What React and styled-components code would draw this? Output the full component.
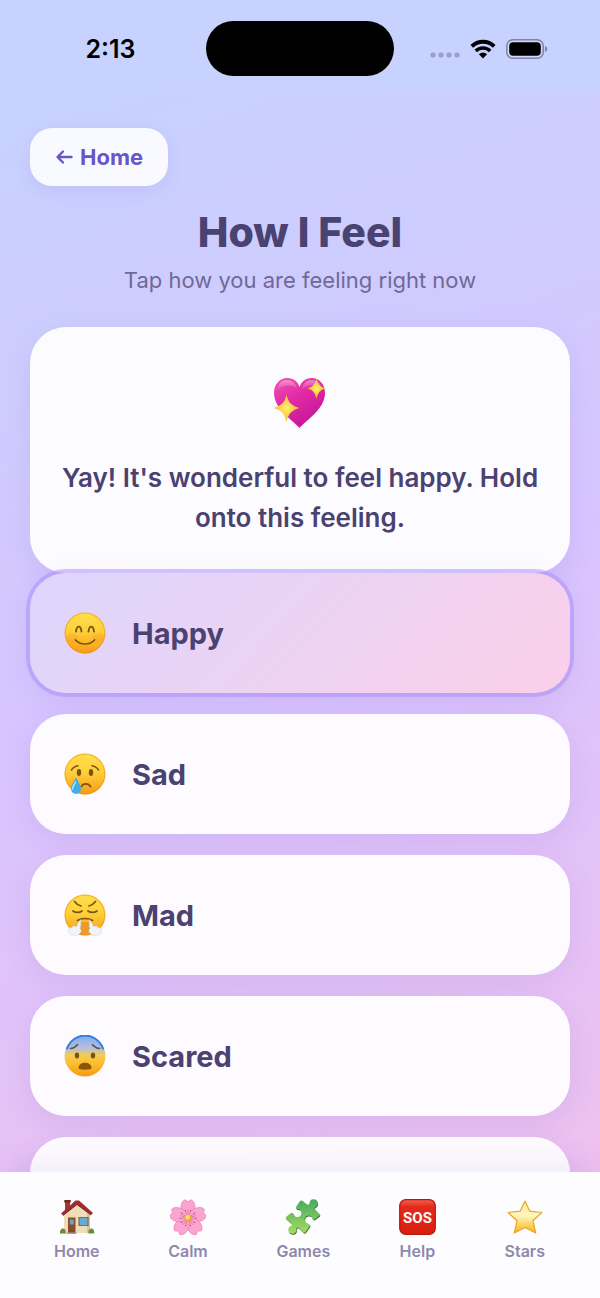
import React, { useState } from 'react';
import styled, { createGlobalStyle, css } from 'styled-components';

const GlobalStyle = createGlobalStyle`
*{
  box-sizing: border-box;
}
body{
  margin: 0;
  font-family: Inter, Roboto, sans-serif;
  color: #4a4270;
}
button, a{
  font-family: inherit;
}
`;

const Screen = styled.div`
height: 100vh;
display: flex;
flex-direction: column;
overflow: hidden;
background: linear-gradient(160deg, #c7d2fe 8%, #d8c4ff 50%, #f3c0ec 100%);
`;
const StatusBar = styled.header`
flex: none;
display: grid;
grid-template-columns: 1fr 188px 1fr;
align-items: center;
height: 92px;
padding-bottom: 16px;
padding-top: 21px;
background: #c8d2ff;
color: #000;
`;
const Clock = styled.time`
padding-left: 15px;
font-size: 25px;
line-height: 30px;
font-weight: 600;
text-align: center;
`;
const Island = styled.div`
height: 55px;
border-radius: 28px;
background: #000;
`;
const StatusIcons = styled.div`
display: flex;
align-items: center;
justify-content: center;
gap: 10px;
padding-right: 16px;
svg{
  display: block;
}
`;
const Content = styled.main`
flex: 1;
min-height: 0;
overflow-y: auto;
scrollbar-width: none;
padding: 36px 30px;
`;
const BackButton = styled.button`
display: flex;
align-items: center;
gap: 7px;
height: 58px;
padding: 0 25px;
border: 0;
border-radius: 22px;
background: rgba(255, 255, 255, 0.88);
box-shadow: 0 6px 18px rgba(108, 92, 200, 0.1);
color: #6a55c8;
font-size: 22px;
font-weight: 700;
`;
const Title = styled.h1`
margin: 21px 0 0;
font-size: 41px;
line-height: 50px;
font-weight: 800;
text-align: center;
`;
const Subtitle = styled.p`
margin: 8px 0 32px;
color: #706896;
font-size: 22px;
line-height: 30px;
text-align: center;
`;
const card = css`
border-radius: 36px;
background: rgba(255, 255, 255, 0.93);
box-shadow: 0 8px 28px rgba(108, 92, 200, 0.12);
`;
const MessageCard = styled.section`
${card}
display: flex;
flex-direction: column;
align-items: center;
gap: 29px;
padding: 50px 30px 35px;
p{
  margin: 0;
  font-size: 26px;
  line-height: 40px;
  font-weight: 600;
  text-align: center;
}
`;
const FeelingList = styled.div`
display: flex;
flex-direction: column;
gap: 21px;
`;
const FeelingButton = styled.button`
${card}
display: flex;
align-items: center;
gap: 26px;
width: 100%;
min-height: 120px;
padding: 0 34px;
border: 0;
color: #4a4270;
font-size: 29px;
font-weight: 700;
text-align: left;
${({ $active }) => $active && css`
  background: linear-gradient(135deg, #ddd6fe, #fbcfe8);
  box-shadow: 0 0 0 4px rgba(167, 139, 250, 0.5), 0 8px 28px rgba(108, 92, 200, 0.12);
`}
`;
const TabBar = styled.nav`
position: relative;
flex: none;
display: flex;
justify-content: space-between;
height: 126px;
padding: 27px 55px 0 54px;
background: #fdfdff;
box-shadow: 0 -6px 30px rgba(108, 92, 200, 0.1);
`;
const Tab = styled.a`
display: flex;
flex-direction: column;
align-items: center;
gap: 6px;
color: #8d88ac;
font-size: 16px;
line-height: 20px;
font-weight: 600;
text-decoration: none;
`;

const Signal = () => (
  <svg width="30" height="20" viewBox="0 0 30 20" fill="#97a0c8">
    {[3, 11, 19, 27].map(x => (
      <rect key={x} x={x - 2.5} y="13.5" width="5" height="5" rx="1.8" />
    ))}
  </svg>
);

const Wifi = () => (
  <svg width="26" height="20" viewBox="0 0 26 20" fill="none" stroke="#000">
    <path d="M1.8 7.3a16 16 0 0 1 22.4 0" strokeWidth="3.9" />
    <path d="M5.8 12a10.200 10.200 0 0 1 14.400 0" strokeWidth="3.6" />
    <path d="M13 19.600L8.900 15.300a5.800 5.800 0 0 1 8.200 0z" fill="#000" stroke="none" />
  </svg>
);

const Battery = () => (
  <svg width="42" height="20" viewBox="0 0 42 20">
    <rect x="0.8" y="0.8" width="36.4" height="18.4" rx="6" fill="#d0d6f6" stroke="#7c83aa" strokeWidth="1.5" />
    <rect x="3.2" y="3.2" width="31.6" height="13.6" rx="4" fill="#000" />
    <path d="M39 7c3 1 3 5 0 6z" fill="#7c83aa" />
  </svg>
);

const Arrow = () => (
  <svg width="18" height="16" viewBox="0 0 18 16" fill="none" stroke="#6a55c8" strokeWidth="2.4" strokeLinecap="round" strokeLinejoin="round">
    <path d="M8 2.500L2.500 8L8 13.500M3 8h13.500" />
  </svg>
);

const Heart = () => (
  <svg width="54" height="52" viewBox="0 0 54 52">
    <defs>
      <linearGradient id="heart" x1="0" y1="0" x2="0.6" y2="1">
        <stop offset="0" stopColor="#ee56b2" />
        <stop offset="0.45" stopColor="#e42ba6" />
        <stop offset="1" stopColor="#c4159a" />
      </linearGradient>
      <radialGradient id="spark">
        <stop offset="0" stopColor="#ffee6e" />
        <stop offset="1" stopColor="#f5b92e" />
      </radialGradient>
      <linearGradient id="gloss" x1="0" y1="0" x2="0" y2="1">
        <stop offset="0" stopColor="#fff" stopOpacity="0.4" />
        <stop offset="1" stopColor="#fff" stopOpacity="0" />
      </linearGradient>
    </defs>
    <path d="M26.500 51C20 43.500 1 32 1 16C1 7 7 1 14.500 1c6 0 10 3.500 12 9C28.500 4.500 32.500 1 38.500 1c7.500 0 13.500 6 13.500 15C52 32 33 43.500 26.500 51z" fill="url(#heart)" />
    <path d="M4 14C5 6 9 3 14 3s9 3 10 9C20 7 9 7 4 14zM29 12c1-6 5-9 10-9s9 3 10 9C45 7 35 7 29 12z" fill="url(#gloss)" />
    <path d="M13.500 17.500c1.800 8 5 11.300 12.800 13.500C18.500 33.200 15.300 36.800 13.500 45C11.700 36.800 8.500 33.200.7 31C8.500 28.800 11.700 25.500 13.500 17.500z" fill="url(#spark)" />
    <path d="M43.500 1.500c1.400 6 3.600 8.400 9.200 9.800c-5.600 1.600-7.800 4.200-9.200 10.700c-1.400-6.500-3.600-9.100-9.200-10.700c5.600-1.400 7.800-3.800 9.200-9.800z" fill="url(#spark)" />
  </svg>
);

const Face = ({ id, top = '#ffe04a', mid = '#ffd03c', children }) => (
  <svg width="42" height="42" viewBox="0 0 42 42" fill="none" strokeLinecap="round">
    <defs>
      <linearGradient id={id} x1="0" y1="0" x2="0" y2="1">
        <stop offset="0" stopColor={top} />
        <stop offset="0.45" stopColor={mid} />
        <stop offset="1" stopColor="#f59a14" />
      </linearGradient>
    </defs>
    <circle cx="21" cy="21" r="20.500" fill={`url(#${id})`} />
    <circle cx="21" cy="21" r="19.800" stroke="#ed9412" strokeOpacity="0.5" strokeWidth="1.2" />
    {children}
  </svg>
);

const HappyFace = () => (
  <Face id="happy">
    <ellipse cx="8" cy="26" rx="6" ry="5" fill="#fb7b1c" opacity="0.15" />
    <ellipse cx="34" cy="26" rx="6" ry="5" fill="#fb7b1c" opacity="0.15" />
    <path d="M12 19.500c.8-6.500 4.700-6.500 5.500 0M24.500 19.500c.8-6.500 4.700-6.500 5.500 0" stroke="#79550c" strokeWidth="1.900" />
    <path d="M11.500 28c4.500 5.300 14.500 5.300 19 0" stroke="#79550c" strokeWidth="1.700" />
  </Face>
);

const SadFace = () => (
  <Face id="sad">
    <path d="M7.500 17c1.500-2.500 3.800-4 6.500-4.300M28 12.700c2.700.3 5 1.800 6.500 4.300" stroke="#855011" strokeWidth="1.500" />
    <ellipse cx="15" cy="19.500" rx="2.200" ry="3.400" fill="#79550c" />
    <ellipse cx="27" cy="19.500" rx="2.200" ry="3.400" fill="#79550c" />
    <path d="M17.500 33.500c1.500-3.500 7-3.500 9 0" stroke="#79550c" strokeWidth="1.800" />
    <path d="M12 24.500c2 4 5 7.500 5 11.500a5 5 0 0 1-10 0c0-4 3-7.500 5-11.500z" fill="#3faeea" />
    <path d="M11.500 29c-1.200 3-3 4.500-3 7" stroke="#a9e5ff" strokeWidth="1.500" />
  </Face>
);

const MadFace = () => (
  <Face id="mad">
    <path d="M10.500 7.500c1.500 2 3.500 3.700 6.500 4.500M31.500 7.500c-1.500 2-3.500 3.700-6.500 4.500" stroke="#79550c" strokeWidth="1.700" />
    <path d="M9 17c2.500 1.800 6.500 1.800 9 0M24 17c2.500 1.800 6.500 1.800 9 0" stroke="#79550c" strokeWidth="1.700" />
    <path d="M16.500 28h9v12.500q-4.500 1-9 0z" fill="#e99a2c" />
    <path d="M13.500 26.500c4-2.700 11-2.700 15 0" stroke="#79550c" strokeWidth="1.600" />
    <g fill="#f0f4fa" stroke="#cbd6e2" strokeWidth="0.600">
      <path d="M16.500 26c-2.500 2-3 5-4 7c-2-2-4.500-1-4.700 1c-2.500-1-4 1-3 3c0 3 3 5 5 3.500c2 2 5 1 5.500-1c2.500-1 2-4 .5-5c1-2 1.200-5 .7-8.500z" />
      <path d="M25.500 26c2.500 2 3 5 4 7c2-2 4.500-1 4.700 1c2.500-1 4 1 3 3c0 3-3 5-5 3.500c-2 2-5 1-5.500-1c-2.500-1-2-4-.5-5c-1-2-1.200-5-.7-8.500z" />
    </g>
  </Face>
);

const ScaredFace = () => (
  <svg width="42" height="42" viewBox="0 0 42 42" fill="none" strokeLinecap="round">
    <defs>
      <linearGradient id="scared" x1="0" y1="0" x2="0" y2="1">
        <stop offset="0" stopColor="#7fabea" />
        <stop offset="0.3" stopColor="#b5bde0" />
        <stop offset="0.48" stopColor="#f3cb58" />
        <stop offset="0.7" stopColor="#fdbd2a" />
        <stop offset="1" stopColor="#f39a14" />
      </linearGradient>
    </defs>
    <circle cx="21" cy="21" r="20.500" fill="url(#scared)" />
    <path d="M3 13.500C10-3.800 32-3.800 39 13.500" stroke="#2f80e0" strokeWidth="2" />
    <path d="M6.500 13.500c2.800-.3 5-1.500 7-3.800M35.500 13.500c-2.800-.3-5-1.500-7-3.800" stroke="#5c5040" strokeWidth="1.600" />
    <ellipse cx="13" cy="20.500" rx="2.200" ry="3" fill="#79550c" />
    <ellipse cx="29" cy="20.500" rx="2.200" ry="3" fill="#79550c" />
    <path d="M14.500 33c0-7 13-7 13 0c0 2.300-13 2.300-13 0z" fill="#8b560b" />
  </svg>
);

const ExcitedFace = () => (
  <Face id="excited">
    <circle cx="14" cy="17" r="3" fill="#79550c" />
    <circle cx="28" cy="17" r="3" fill="#79550c" />
    <path d="M10 24h22c-1 12-21 12-22 0z" fill="#79550c" />
  </Face>
);

const HouseIcon = () => (
  <svg width="36" height="36" viewBox="0 0 36 36">
    <path d="M6 2h5v9H6z" fill="#a2392f" />
    <path d="M5.300 1h6.400v2.600H5.300z" fill="#7a251f" />
    <path d="M5 14L18 4l12 10v20H5z" fill="#f0dcb8" />
    <path d="M28 14h3v20h-3z" fill="#dcc096" />
    <path d="M2 14.500L16.500 1.500H20L34 14l-2 2L18 5.500 4 16.500z" fill="#a22c30" />
    <path d="M4 16.500L18 5.500l14 10.500" fill="none" stroke="#6e1c22" strokeWidth="0.900" />
    <path d="M9 18.500h7.500V34H9z" fill="#8a4d2c" />
    <path d="M10.800 20.500h4v5h-4z" fill="#66a3c4" />
    <path d="M20 18.500h9v8h-9z" fill="#67aad4" stroke="#806a58" strokeWidth="1.200" />
    <path d="M7.500 33.500h10V35h-10z" fill="#aaa095" />
    <path d="M1 34.500c-.5-3 1-5 3-5s3 2 2.800 5zM29.500 34.500c-.5-3 1-5 3-5s3 2 2.800 5z" fill="#62913a" />
  </svg>
);

const FlowerIcon = () => (
  <svg width="36" height="36" viewBox="0 0 36 36">
    {[0, 72, 144, 216, 288].map(deg => (
      <g key={deg} transform={`rotate(${deg} 18 19)`}>
        <path d="M18 19C8.500 13 10 2.500 15 .8L18 2.800 21 .8C26 2.500 27.500 13 18 19z" fill="#f9a5d0" stroke="#ec7fb5" strokeWidth="0.700" />
        <path d="M18 17v-6M17.500 17l-2-5M18.500 17l2-5" stroke="#e0609f" strokeWidth="0.600" />
        <circle cx="15.300" cy="11.500" r="0.600" fill="#a52760" />
        <circle cx="20.700" cy="11.500" r="0.600" fill="#a52760" />
      </g>
    ))}
    <circle cx="18" cy="19" r="3.600" fill="#eda735" />
    <circle cx="17.600" cy="18.300" r="2.200" fill="#ffdf6c" />
  </svg>
);

const PuzzleIcon = () => {
  const piece = 'M15 2Q16 1 17 1.600L22 5.500Q24 6.600 24.600 4A4 4 0 1 1 30 8Q28.800 9.500 30 10.500L34.500 15Q35.300 16 34.300 16.800L30 20Q28 21 27.500 19.500A4 4 0 1 0 23 24.500Q25.500 25.500 25 27L20.500 33Q19.500 34.500 18.200 33.200L14 29Q12 27.800 11.300 30A4 4 0 1 1 6 27Q7.500 26 6.500 24.500L1 19.500Q.3 18.300 1.500 17.500L6 14Q7.500 13.200 8.500 15A4 4 0 1 0 12.500 10Q10.500 9.800 11 8z';
  return (
    <svg width="36" height="36" viewBox="0 0 36 36">
      <defs>
        <linearGradient id="piece" x1="0" y1="0" x2="0" y2="1">
          <stop offset="0" stopColor="#45a960" />
          <stop offset="1" stopColor="#a7dc62" />
        </linearGradient>
      </defs>
      <path d={piece} transform="translate(0.500 1)" fill="#3f6f35" />
      <path d={piece} fill="url(#piece)" />
    </svg>
  );
};

const SosIcon = () => (
  <svg width="37" height="36" viewBox="0 0 37 36">
    <defs>
      <linearGradient id="sos" x1="0" y1="0" x2="0" y2="1">
        <stop offset="0" stopColor="#f5604f" />
        <stop offset="0.2" stopColor="#e42b1b" />
        <stop offset="1" stopColor="#d81f10" />
      </linearGradient>
    </defs>
    <rect x="0.700" y="0.700" width="35.600" height="34.600" rx="6" fill="url(#sos)" stroke="#b5190e" strokeWidth="1.200" />
    <text x="18.500" y="24" textAnchor="middle" fill="#fff" fontFamily="Roboto, sans-serif" fontSize="15" fontWeight="700">SOS</text>
  </svg>
);

const StarIcon = () => (
  <svg width="36" height="36" viewBox="0 0 36 36">
    <defs>
      <linearGradient id="star" x1="0" y1="0" x2="0" y2="1">
        <stop offset="0" stopColor="#ffe98a" />
        <stop offset="0.45" stopColor="#fff6c0" />
        <stop offset="1" stopColor="#f9b50c" />
      </linearGradient>
    </defs>
    <path d="M18 2l4.800 10.200 12 1.300-8.800 8.300 2.700 12.200L18 28.500 7.300 34 10 21.800 1.200 13.500l12-1.300z" fill="url(#star)" stroke="#e9a62c" strokeWidth="1.200" strokeLinejoin="round" />
  </svg>
);

const feelings = [
  { id: 1, name: 'Happy', label: 'Happy', Icon: HappyFace },
  { id: 2, name: 'Sad', label: 'Sad', Icon: SadFace },
  { id: 3, name: 'Mad', label: 'Mad', Icon: MadFace },
  { id: 4, name: 'Scared', label: 'Scared', Icon: ScaredFace },
  { id: 5, name: 'Excited', Icon: ExcitedFace },
];

const tabs = [
  { label: 'Home', Icon: HouseIcon },
  { label: 'Calm', Icon: FlowerIcon },
  { label: 'Games', Icon: PuzzleIcon },
  { label: 'Help', Icon: SosIcon },
  { label: 'Stars', Icon: StarIcon },
];

export const App = () => {
  const [selected, setSelected] = useState(1);

  return (
    <>
      <GlobalStyle />
      <Screen>
        <StatusBar>
          <Clock>2:13</Clock>
          <Island />
          <StatusIcons>
            <Signal />
            <Wifi />
            <Battery />
          </StatusIcons>
        </StatusBar>
        <Content>
          <BackButton type="button"><Arrow />Home</BackButton>
          <Title>How I Feel</Title>
          <Subtitle>Tap how you are feeling right now</Subtitle>
          <MessageCard>
            <Heart />
            <p>Yay! It&apos;s wonderful to feel happy. Hold onto this feeling.</p>
          </MessageCard>
          <FeelingList>
            {feelings.map(({ id, name, label, Icon }) => (
              <FeelingButton
                key={id}
                type="button"
                $active={selected === id}
                aria-label={name}
                aria-pressed={selected === id}
                onClick={() => setSelected(id)}
              >
                <Icon />
                {label}
              </FeelingButton>
            ))}
          </FeelingList>
        </Content>
        <TabBar>
          {tabs.map(({ label, Icon }) => (
            <Tab key={label} href={`#${label.toLowerCase()}`}>
              <Icon />
              {label}
            </Tab>
          ))}
        </TabBar>
      </Screen>
    </>
  );
};

export default App;
